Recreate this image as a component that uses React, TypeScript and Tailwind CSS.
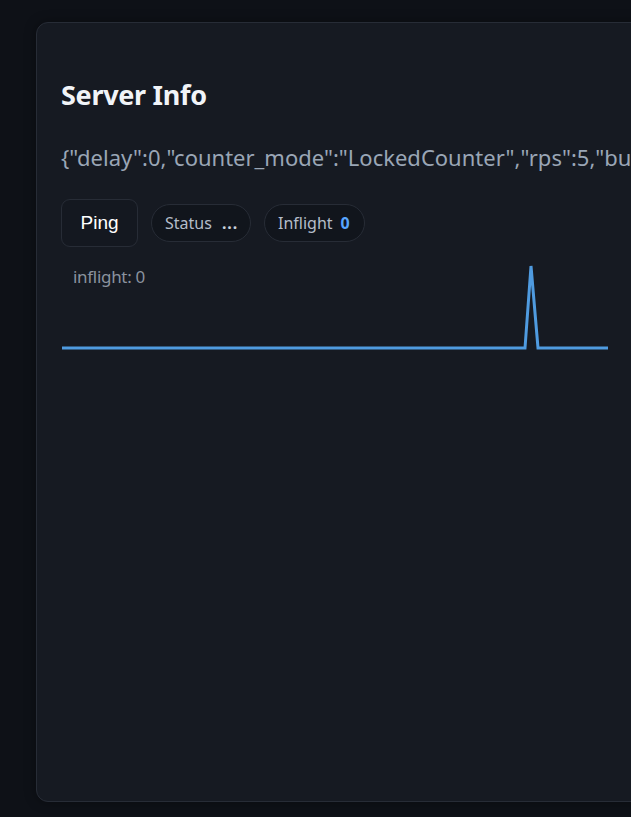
import React from "react";

export default function App() {
  const pts = "1,92 464,92 470,10 477,92 547,92";
  return (
    <div className="w-[631px] h-[817px] overflow-hidden bg-[#0e1117]" style={{ fontFamily: '"Noto Sans", "Open Sans", sans-serif' }}>
      <div className="pt-[22px] pl-[36px]">
        <div className="w-[700px] h-[780px] rounded-[12px] border border-[#272c36] bg-[#161a22] shadow-[0_0_12px_rgba(0,0,0,0.35)] pl-[24px] pt-[56px]">
          <h2 className="text-[27px] font-bold leading-[32px] text-[#f1f4f8] tracking-[-0.3px]">Server Info</h2>
          <div className="mt-[31px] text-[22px] leading-[30px] text-[#9aa6b6] whitespace-nowrap">
            {'{"delay":0,"counter_mode":"LockedCounter","rps":5,"burst":10}'}
          </div>
          <div className="mt-[27px] flex items-center gap-[13px]">
            <button className="h-[48px] w-[77px] rounded-[9px] border border-[#272c36] bg-[#141820] text-[19px] text-white" style={{ fontFamily: '"Liberation Sans", Arial, sans-serif' }}>Ping</button>
            <div className="h-[38px] w-[100px] rounded-full border border-[#272c36] bg-[#11151c] flex items-center pl-[13px] text-[16px] text-[#b4bdc9]">
              <span>Status</span>
              <span className="ml-[10px] font-bold text-[#c8d0db] tracking-[1px]">...</span>
            </div>
            <div className="h-[38px] w-[101px] rounded-full border border-[#272c36] bg-[#11151c] flex items-center pl-[13px] text-[16px] text-[#b4bdc9]">
              <span>Inflight</span>
              <span className="ml-[8px] font-bold text-[#58a6ff]">0</span>
            </div>
          </div>
          <div className="relative mt-[9px] w-[548px] h-[110px]">
            <span className="absolute left-[12px] top-[8px] text-[17px] text-[#8a929e] tracking-[-0.3px]">inflight: 0</span>
            <svg width="548" height="110" viewBox="0 0 548 110" className="absolute left-0 top-0">
              <polyline points={pts} fill="none" stroke="#4f9be0" strokeWidth="3" strokeLinejoin="miter" />
            </svg>
          </div>
        </div>
      </div>
    </div>
  );
}
